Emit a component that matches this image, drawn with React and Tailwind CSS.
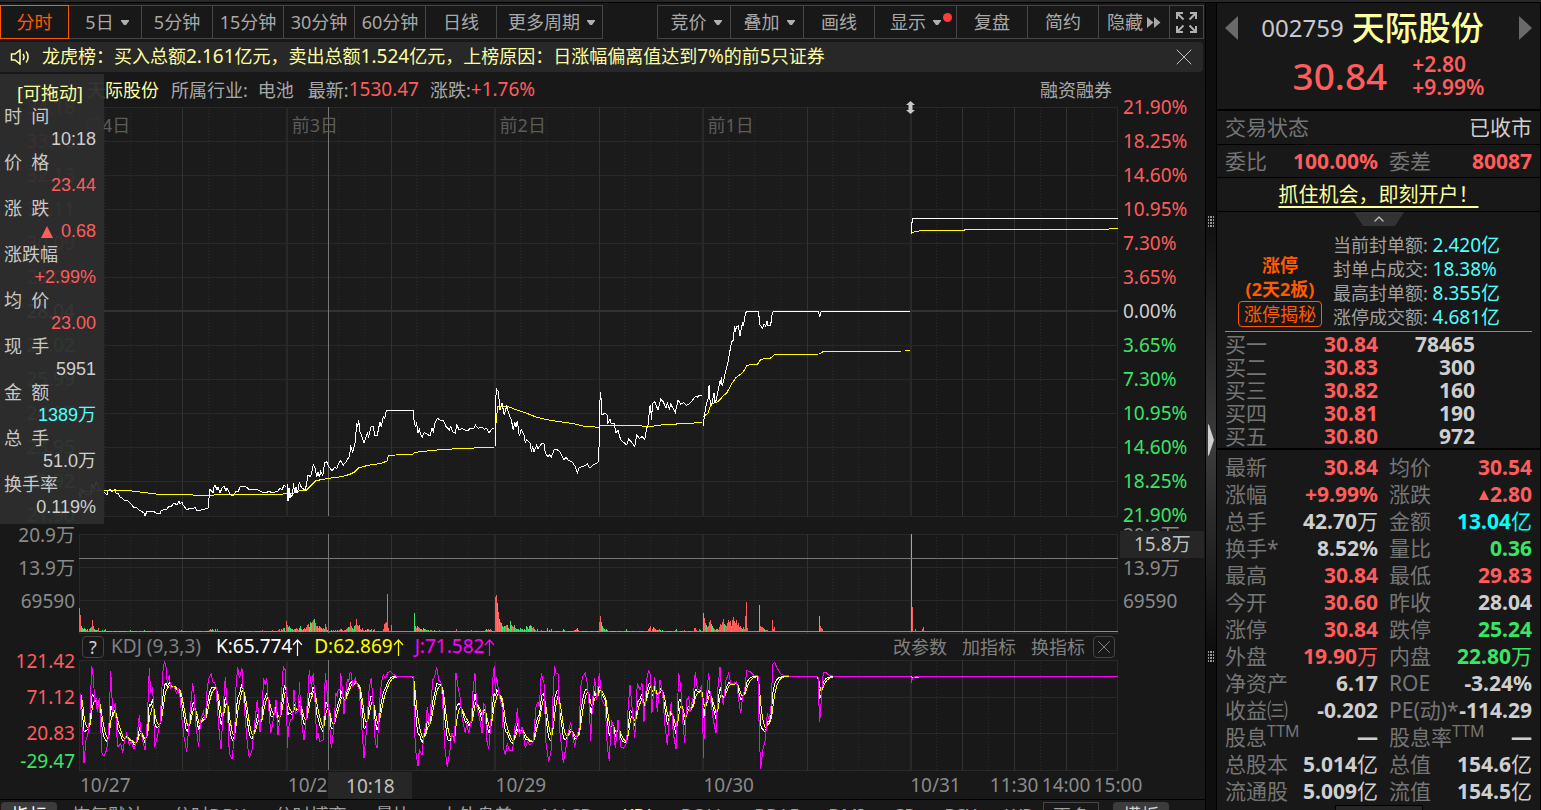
import { X, ChevronUp } from "lucide-react";

const RED = "#ff5c5c";
const GREEN = "#38e664";

const periods = [
  { label: "分时", width: "w-[69px]", active: true },
  { label: "5日", width: "w-[74px]", menu: true },
  { label: "5分钟", width: "w-[72px]" },
  { label: "15分钟", width: "w-[72px]" },
  { label: "30分钟", width: "w-[72px]" },
  { label: "60分钟", width: "w-[72px]" },
  { label: "日线", width: "w-[72px]" },
  { label: "更多周期", width: "w-[107px]", menu: true },
];

const tools = [
  { label: "竞价", width: "w-[74px]", menu: true },
  { label: "叠加", width: "w-[74px]", menu: true },
  { label: "画线", width: "w-[72px]" },
  { label: "显示", width: "w-[83px]", menu: true, dot: true },
  { label: "复盘", width: "w-[72px]" },
  { label: "简约", width: "w-[72px]" },
];

const priceLabels = ["34.18", "33.16", "32.13", "31.11", "30.09", "29.06", "28.04", "27.02", "25.99", "24.97", "23.95", "22.92", "21.90"];
const percentLabels = ["21.90%", "18.25%", "14.60%", "10.95%", "7.30%", "3.65%", "0.00%", "3.65%", "7.30%", "10.95%", "14.60%", "18.25%", "21.90%"];

const cursorRows = [
  { label: "时  间", value: "10:18", color: "text-[#cfcfcf]" },
  { label: "价  格", value: "23.44", color: "text-[#ff5c5c]" },
  { label: "涨  跌", value: "0.68", color: "text-[#ff5c5c]", up: true },
  { label: "涨跌幅", value: "+2.99%", color: "text-[#ff5c5c]" },
  { label: "均  价", value: "23.00", color: "text-[#ff5c5c]" },
  { label: "现  手", value: "5951", color: "text-[#cfcfcf]" },
  { label: "金  额", value: "1389万", color: "text-[#50ffff]" },
  { label: "总  手", value: "51.0万", color: "text-[#cfcfcf]" },
  { label: "换手率", value: "0.119%", color: "text-[#cfcfcf]" },
];

const sealRows = [
  ["当前封单额:", "2.420亿"],
  ["封单占成交:", "18.38%"],
  ["最高封单额:", "8.355亿"],
  ["涨停成交额:", "4.681亿"],
];

const bids = [
  ["买一", "30.84", "78465"],
  ["买二", "30.83", "300"],
  ["买三", "30.82", "160"],
  ["买四", "30.81", "190"],
  ["买五", "30.80", "972"],
];

const white = "text-[#cfcfcf]";
const red = "text-[#ff5c5c]";
const green = "text-[#38e664]";

const stats = [
  { label: "最新", value: "30.84", color: red },
  { label: "均价", value: "30.54", color: red },
  { label: "涨幅", value: "+9.99%", color: red },
  { label: "涨跌", value: "2.80", color: red, up: true },
  { label: "总手", value: "42.70", unit: "万", color: white },
  { label: "金额", value: "13.04", unit: "亿", color: "text-[#00ffff]" },
  { label: "换手*", value: "8.52%", color: white },
  { label: "量比", value: "0.36", color: green },
  { label: "最高", value: "30.84", color: red },
  { label: "最低", value: "29.83", color: red },
  { label: "今开", value: "30.60", color: red },
  { label: "昨收", value: "28.04", color: white },
  { label: "涨停", value: "30.84", color: red },
  { label: "跌停", value: "25.24", color: green },
  { label: "外盘", value: "19.90", unit: "万", color: red },
  { label: "内盘", value: "22.80", unit: "万", color: green },
  { label: "净资产", value: "6.17", color: white },
  { label: "ROE", value: "-3.24%", color: white },
  { label: "收益㈢", value: "-0.202", color: white },
  { label: "PE(动)*", value: "-114.29", color: white },
  { label: "股息", sup: "TTM", value: "—", color: white },
  { label: "股息率", sup: "TTM", value: "—", color: white },
  { label: "总股本", value: "5.014", unit: "亿", color: white },
  { label: "总值", value: "154.6", unit: "亿", color: white },
  { label: "流通股", value: "5.009", unit: "亿", color: white },
  { label: "流值", value: "154.5", unit: "亿", color: white },
];

const indicatorTabs = ["恢复默认", "分时DDX", "分时博弈", "量比", "大外盘差", "MACD", "KDJ", "BOLL", "BBAE", "DMI", "CR", "BSY", "WR"];

// Each session is stored as flat x,y pairs with its own origin and scale
const priceSeries = [
  { ox: 0, oy: 0, kx: 1, ky: 1, d: [79,492,80,498,82,490,85,494,91,494,92,484,94,489,96,482,98,485,100,491,103,490,104,492,107,495,108,491,110,489,112,492,115,489,116,493,118,493,120,497,122,498,125,501,127,500,129,502,132,505,134,508,136,507,139,510,141,511,144,513,145,516,147,511,150,512,153,511,156,513,160,514,161,511,163,510,167,509,169,506,171,507,174,503,177,505,179,501,180,504,182,502,183,505,187,510,190,508,193,509,195,507,197,511,201,510,205,509,208,508,209,498,210,489,213,493,214,487,215,485,217,490,218,487,220,493,222,488,224,486,226,491,227,488,230,494,233,496,236,491,238,492,240,487,242,486,246,487,250,490,255,489,258,490,262,492,266,493,269,491,272,493,278,491,280,488,282,490,284,485,286,487] },
  { ox: 287, oy: 485, kx: 1, ky: 1, d: [0,-1,1,16,2,3,3,13,4,8] },
  { ox: 290, oy: 280, kx: 1 / 3, ky: 1 / 3, d: [0,640,5,648,8,645,10,610,14,640,18,622,21,638,24,630,28,605,34,622,42,628,46,630,50,610,54,585,62,590,70,555,75,565,80,590,84,575,88,592,92,575,98,587,104,548,110,545,116,560,126,572,134,562,140,566,146,550,152,542,160,555,168,545,178,530,182,500,188,515,196,485,200,430,203,440,206,420,210,455,216,470,222,490,228,470,232,460,236,470,244,438,250,440,254,465,262,465,270,425,274,440,280,410,284,415,288,395,292,391,370,391,372,420,376,440,380,430,384,460,388,448,392,462,397,472,402,458,412,462,420,468,426,445,430,455,434,432,442,415,450,420,460,420,468,440,478,450,482,440,488,455,496,460,500,435,508,450,516,445,524,450,534,452,540,445,552,445,556,435,564,445,576,442,584,448,590,445,597,460,604,448,612,445] },
  { ox: 290, oy: 280, kx: 1 / 3, ky: 1 / 3, d: [616,498,617,355,620,328,625,335,630,390,636,370,643,405,650,378,656,400,664,420,670,450,674,425,678,440,682,422,688,468,694,448,702,465,706,488,710,480,720,490,724,512,728,500,732,516,740,495,744,508,748,500,756,490,762,492,766,520,774,530,778,524,784,532,792,510,800,508,810,515,822,540,828,532,836,542,846,545,856,560,862,580,868,562,880,560,892,552,900,565,910,555,922,548,926,545,930,360,932,335,936,405,944,400,952,405,954,430,960,418,964,432,972,430,978,460,984,450,992,480,1002,488,1010,495,1016,478,1026,488,1034,500,1040,465,1048,475,1056,470,1064,478,1070,445,1076,430,1078,385,1082,375,1084,420,1088,370,1094,365,1104,390,1112,358,1120,365,1128,385,1132,368,1138,388,1142,372,1156,398,1164,360,1172,372,1180,368,1190,376,1200,370,1212,355,1218,348,1221,352,1228,346,1236,346] },
  { ox: 600, oy: 200, kx: 0.3827, ky: 1 / 3, d: [270,678,273,645,278,610,282,600,285,555,288,610,292,615,298,580,300,605,303,602,308,575,313,545,315,552,317,530,319,558,323,545,327,520,334,490,340,450,344,425,349,420,351,378,354,390,357,380,361,378,366,408,370,380,373,370,375,375,380,340,384,334,414,334,418,375,425,385,429,372,433,378,436,362,439,378,446,375,450,340,453,334,571,334,574,352,578,334,810,334] },
  { ox: 600, oy: 200, kx: 0.3827, ky: 1 / 3, d: [814,100,815,70,817,55,1354,55] },
];

const averageSeries = [
  { ox: 0, oy: 130, kx: 1 / 3, ky: 1 / 3, d: [237,1075,260,1085,312,1080,370,1080,420,1086,475,1093,560,1094,620,1097,650,1094,845,1093,860,1090] },
  { ox: 290, oy: 280, kx: 1 / 3, ky: 1 / 3, d: [0,643,30,632,50,630,78,602,115,595,155,590,180,583,195,575,207,563,235,556,275,550,292,542,295,526,368,523,375,517,440,510,500,506,575,503,612,502] },
  { ox: 290, oy: 280, kx: 1 / 3, ky: 1 / 3, d: [618,430,623,378,650,378,680,390,710,400,740,412,780,421,850,431,880,438,925,442,932,437,1025,437,1085,439,1120,434,1200,430,1236,427] },
  { ox: 600, oy: 200, kx: 0.3827, ky: 1 / 3, d: [270,650,282,640,290,612,308,605,320,590,332,577,345,550,355,533,373,518,384,496,412,492,420,478,446,474,455,465,572,462,585,454,796,453,810,452] },
  { ox: 600, oy: 200, kx: 0.3827, ky: 1 / 3, d: [814,103,816,97,845,91,950,91,958,88,1320,88,1354,85] },
];

// Turning points of the J line, x and y in thirds of a unit
const jTurns = [
  { ox: 0, d: [240,520,246,620,252,730,258,660,264,640,270,580,275,437,280,470,284,540,288,535,292,575,298,535,302,620,306,700,312,708,320,690,326,640,332,452,338,575,346,548,350,640,354,680,362,670,368,698,374,660,380,640,388,675,394,665,402,688,410,660,418,585,424,640,430,670,435,690,442,600,448,445,452,520,458,500,464,680,472,650,480,610,486,500,490,440,494,425,498,440,502,490,508,465,512,505,522,500,530,520,534,505,540,530,546,600,552,650,560,695,568,600,578,490,582,520,588,620,596,680,602,600,610,575,616,600,622,500,628,470,634,462,638,485,644,490,648,500,652,560,658,640,663,688,670,560,676,472,682,560,688,700,696,718,704,640,708,500,713,442,718,475,726,445,730,520,736,600,742,670,748,715,756,690,764,610,772,540,780,635,786,560,791,475,796,495,800,475,806,560,812,640,820,600,828,540,834,645,840,590,846,500,850,440,856,450,860,550,862,683,866,620,872,600,878,595,882,510,888,580,896,570,898,485,904,600,912,660,918,600,924,520,928,450,934,500,940,460,946,560,950,660,954,640,960,665,970,660,976,460,980,500,988,600,994,685,1000,640,1008,520,1012,530,1015,508,1020,510,1022,458,1028,520,1032,583,1036,530,1042,480,1046,485,1050,458,1054,460,1058,500,1066,475,1072,495,1078,510,1084,600,1092,715,1100,620,1108,500,1114,475,1120,560,1126,670,1132,685,1138,560,1144,490,1150,465,1156,475,1164,457,1172,455,1180,462,1188,468] },
  { ox: 1200, d: [2,470,40,470,44,640,48,700,54,738,58,690,66,705,72,640,78,610,82,560,88,615,94,540,98,480,104,470,110,440,116,480,124,490,130,580,134,680,142,740,150,690,156,640,164,670,168,460,174,500,180,530,186,590,196,640,200,610,206,640,214,600,220,500,225,460,230,560,238,590,246,640,250,550,256,560,260,660,266,688,272,620,278,480,283,437,286,510,290,470,298,530,306,560,312,690,316,705,322,670,328,690,338,690,344,620,348,610,352,565,358,650,366,620,376,685,382,665,390,675,400,665,408,560,414,545,418,560,424,460,432,490,438,670,446,725,454,690,460,500,464,437,468,460,474,460,480,640,490,728,498,680,504,640,512,605,518,650,524,680,530,650,538,620,542,500,548,470,556,460,562,490,568,560,572,662,578,540,584,475,590,540,598,460,606,540,616,560,622,680,628,722,634,600,640,620,646,685,654,600,662,680,670,685,680,670,684,570,690,495,696,560,704,655,712,490,720,510,726,490,732,605,740,480,746,450,752,470,756,578,764,470,772,575,780,480,788,520,794,610,802,675,808,590,814,545,820,640,828,688,836,460,842,500,848,600,854,670,860,540,866,530,870,575,880,530,886,455,892,505,898,510,904,500,908,560,910,715,914,600,920,520,926,460,932,540,940,600,948,640,954,500,960,440,966,530,970,555,978,480,986,460,992,490,1002,490,1010,485,1016,540,1022,580,1028,530,1034,510,1040,452,1050,455,1060,465,1074,468,1078,640,1082,748,1088,690,1096,660,1102,580,1108,600,1114,550,1118,432,1124,428,1132,445,1142,462,1152,466,1180,470] },
  { ox: 2400, d: [0,470,54,470,56,535,59,605,62,570,66,500,70,458,78,458,86,465,100,468,120,470,333,470,335,482,338,474,345,470,955,470] },
];

// Bar heights per minute, negative for a falling minute
const volumeRuns = [
  [79, [24,17,-6,-4,-3,-4,-3,2,-3,1,3,-4,5,12,6,-3,-2,-2,2,4,-1,-1,1,-2,1,-2,3]],
  [130, [-2]], [144, [-2]], [181, [2]],
  [209, [2,3,-2,-3,2,1,-3,-1,3]],
  [262, [2]], [272, [2]],
  [278, [2,3,1,-3,2,4,-4,1,11,7,-5,6,-4,3,-3,2,3,-3,4,3,2,-4,-6,-3,2,-3,4,-3,5,7,8,-5,-10,-9,10,12,-13,9,6,-6,4,-6,5,-4,3,4,-3,8,5,-2,-3]],
  [331, [-2,1,2,-1,2,1,-2,1,2,3,-3,2,-1,2,-2,3,4,-5,5,10,6,-4,3,-6,7,13,7,6,-7,3,-2,4,2,-1,-2,2,-3,3,2,-2,3,1,-2,3]],
  [382, [1,3,8,9,10,38,4]], [391, [7]],
  [414, [-19,-6,4,-6,5,4,-3,-3,2,-4,-3,3,-2,2,-2,-1,2,2,-1,1,-2]],
  [439, [2]], [456, [3]], [471, [2]],
  [485, [2,-3,2,3,-2,3,2]],
  [495, [35,37,-29,20,-13,10,-9,-6,5,-6,6,7,-7,-4,3,-11,-7,6,5,-7,4,-3,3,-3,2,-4,3,-3,2,-3,2,-6,5,-3,-6,-7,-6,4,5,-3,2,1,-3]],
  [541, [2]], [547, [-4,1,-2]], [551, [-3]], [563, [-3,-2]], [574, [2,-2,3,-4,2]],
  [599, [10,16,-10,-6,4,-3,2,-3,2]],
  [626, [-3]], [648, [3,4,6,1,3,-5,4,-3,2,-2,2,3,-2,1,-2]],
  [675, [2,-3]], [684, [2]], [694, [4,4,2,1,1,3,-2]],
  [703, [-19,14,9,-7,5,6,10,12,-8,-6,-4,3,2,-3,-3,2,5,8,7,10,13,-8,7,6,9,12,10,11,-6,12,15,11,9,12,7,9,5,6,4,-3,5,3,16,30,4]],
  [759, [-27,6,5,5,4,-3,2,2,2]], [772, [12,3,5]],
  [819, [-16,6,4,3]], [911, [-98,25]], [915, [3]], [922, [3,5]],
];

const dayLines = [287, 495, 703, 911];
const halfLines = [182, 391, 599, 807, 962, 1014, 1066];
const dottedLines = [];
for (let i = 0; i < 39; i++) {
  const x = 104 + i * 26;
  const solid = [...dayLines, ...halfLines].some((s) => Math.abs(s - x) < 4);
  if (!solid) dottedLines.push(x);
}

const toPoints = ({ ox, oy, kx, ky, d }) => {
  const out = [];
  for (let i = 0; i < d.length; i += 2) {
    out.push(`${(ox + d[i] * kx).toFixed(1)},${(oy + d[i + 1] * ky).toFixed(1)}`);
  }
  return out.join(" ");
};

// K and D follow from J: J = 3K - 2D, D = 2/3 D' + 1/3 K
const buildKdj = () => {
  const turns = [];
  jTurns.forEach(({ ox, d }) => {
    for (let i = 0; i < d.length; i += 2) turns.push([ox + d[i], d[i + 1]]);
  });
  const k = [];
  const d = [];
  let prev = 515;
  let seg = 0;
  for (let x = 242; x < 3354; x += 2.6) {
    while (seg < turns.length - 2 && turns[seg + 1][0] < x) seg++;
    const [x0, y0] = turns[seg];
    const [x1, y1] = turns[seg + 1];
    const j = y0 + ((y1 - y0) * (x - x0)) / (x1 - x0);
    const dv = (6 * prev + j) / 7;
    const kv = (j + 2 * dv) / 3;
    prev = dv;
    k.push(`${(x / 3).toFixed(1)},${(520 + kv / 3).toFixed(1)}`);
    d.push(`${(x / 3).toFixed(1)},${(520 + dv / 3).toFixed(1)}`);
  }
  return {
    j: turns.map(([x, y]) => `${(x / 3).toFixed(1)},${(520 + y / 3).toFixed(1)}`).join(" "),
    k: k.join(" "),
    d: d.join(" "),
  };
};

const kdj = buildKdj();

function Grid({ top, bottom, rows }) {
  return (
    <g shapeRendering="crispEdges" fill="none">
      <rect x="79" y={top} width="832" height={bottom - top} fill="#1b1b1b" />
      {rows.map((y) => (
        <line key={y} x1="79" x2="1118" y1={y + 0.5} y2={y + 0.5} stroke="#292929" />
      ))}
      {dottedLines.map((x) => (
        <line key={x} x1={x + 0.5} x2={x + 0.5} y1={top} y2={bottom} stroke="#2a2a2a" strokeDasharray="1 2" />
      ))}
      {halfLines.map((x) => (
        <line key={x} x1={x + 0.5} x2={x + 0.5} y1={top} y2={bottom} stroke="#323232" />
      ))}
      {dayLines.map((x) => (
        <line key={x} x1={x} x2={x} y1={top} y2={bottom} stroke="#282828" strokeWidth="2" />
      ))}
      <line x1="79.5" x2="79.5" y1={top} y2={bottom} stroke="#292929" />
      <line x1="1117.5" x2="1117.5" y1={top} y2={bottom} stroke="#292929" />
    </g>
  );
}

function PriceChart() {
  return (
    <svg className="block h-[411px] w-full" viewBox="79 107 1039 411" preserveAspectRatio="none">
      <Grid top={107} bottom={517} rows={[107, 141, 175, 209, 243, 277, 345, 379, 413, 447, 481, 516]} />
      <g shapeRendering="crispEdges" fill="none">
        <line x1="79" x2="1118" y1="311" y2="311" stroke="#323232" strokeWidth="2" />
        <line x1="328.5" x2="328.5" y1="107" y2="516" stroke="#777" />
        {averageSeries.map((s, i) => (
          <polyline key={i} points={toPoints(s)} stroke="#ffff00" vectorEffect="non-scaling-stroke" />
        ))}
        {priceSeries.map((s, i) => (
          <polyline key={i} points={toPoints(s)} stroke="#ffffff" vectorEffect="non-scaling-stroke" />
        ))}
      </g>
    </svg>
  );
}

function VolumeChart() {
  return (
    <svg className="block h-[100px] w-full" viewBox="79 534 1039 100" preserveAspectRatio="none">
      <Grid top={534} bottom={633} rows={[534, 567, 600, 633]} />
      <g shapeRendering="crispEdges">
        <rect x="79" y="631" width="1039" height="1" fill={RED} />
        <line x1="105" x2="280" y1="631.5" y2="631.5" stroke={GREEN} strokeDasharray="7 2 3 1 9 3" />
        <line x1="425" x2="495" y1="631.5" y2="631.5" stroke={GREEN} strokeDasharray="3 4 5 2" />
        <line x1="540" x2="695" y1="631.5" y2="631.5" stroke={GREEN} strokeDasharray="6 2 3 3" />
        {volumeRuns.map(([x, bars]) =>
          bars.map((h, i) => (
            <rect key={x + i} x={x + i} y={632 - Math.abs(h)} width="1" height={Math.abs(h)} fill={h > 0 ? RED : GREEN} />
          ))
        )}
        <line x1="79" x2="1118" y1="558.5" y2="558.5" stroke="#777" />
        <line x1="328.5" x2="328.5" y1="534" y2="633" stroke="#777" />
      </g>
    </svg>
  );
}

function KdjChart() {
  return (
    <svg className="block h-[111px] w-full" viewBox="79 660 1039 111" preserveAspectRatio="none">
      <Grid top={660} bottom={770} rows={[660, 697, 733, 770]} />
      <g shapeRendering="crispEdges" fill="none">
        <line x1="328.5" x2="328.5" y1="660" y2="770" stroke="#777" />
        <polyline points={kdj.k} stroke="#ffffff" vectorEffect="non-scaling-stroke" />
        <polyline points={kdj.d} stroke="#ffff00" vectorEffect="non-scaling-stroke" />
        <polyline points={kdj.j} stroke="#ff00ff" vectorEffect="non-scaling-stroke" />
      </g>
    </svg>
  );
}

function Caret() {
  return (
    <svg className="h-[5px] w-[8px]" viewBox="0 0 8 5" fill="#b0b0b0">
      <path d="M0 0h8v1L5 5H3L0 1z" />
    </svg>
  );
}

function ToolButton({ label, width, active, menu, dot }) {
  return (
    <button
      className={`relative -ml-px flex h-[34px] items-center justify-center gap-[7px] border whitespace-nowrap first:ml-0 ${width} ${
        active ? "z-10 border-[#ff5a00] text-[#ff5a00]" : "border-[#464646]"
      } ${menu && !dot ? "pl-1" : ""}`}
    >
      {label}
      {menu && <Caret />}
      {dot && <span className="absolute top-[7px] right-1 h-[9px] w-[9px] rounded-full bg-[#ff3c3c]" />}
    </button>
  );
}

function Toolbar() {
  return (
    <div className="mt-[2px] flex justify-between pr-[1px] text-[#a8a8a8]">
      <div className="flex">
        {periods.map((p) => (
          <ToolButton key={p.label} {...p} />
        ))}
      </div>
      <div className="flex">
        {tools.map((t) => (
          <ToolButton key={t.label} {...t} />
        ))}
        <button className="-ml-px flex h-[34px] w-[72px] items-center justify-center gap-1 border border-[#3a3a3a] whitespace-nowrap">
          隐藏
          <svg className="h-[11px] w-[14px]" viewBox="0 0 14 11" fill="#a8a8a8">
            <path d="M0 0l6.500 5.500L0 11zM7 0l6.500 5.500L7 11z" />
          </svg>
        </button>
        <button className="-ml-px flex h-[34px] w-[35px] items-center justify-center border border-[#464646]" aria-label="全屏">
          <svg className="h-[21px] w-[21px]" viewBox="0 0 21 21" fill="none" stroke="#b0b0b0" strokeWidth="2">
            <path d="M1 7V1h6M14 1h6v6M20 14v6h-6M7 20H1v-6M1 1l6.500 6.500M20 1l-6.500 6.500M20 20l-6.500-6.500M1 20l6.500-6.500" />
          </svg>
        </button>
      </div>
    </div>
  );
}

function Num({ children }) {
  return <span className="text-[19px]">{children}</span>;
}

function Notice() {
  return (
    <div className="mt-[3px] mr-[2px] flex h-[30px] items-center rounded-r bg-[#282828] pr-[5px] pl-[10px] text-[#fdff9f]">
      <svg className="mr-3 h-[16px] w-[20px]" viewBox="0 0 20 16" fill="none" stroke="#fdff9f" strokeWidth="1.500">
        <path d="M1.500 5h3.500l5-4v14l-5-4H1.500zM13 5c1.300 1.800 1.300 4.200 0 6M16 2.500c2.800 3 2.800 8 0 11" />
      </svg>
      <p className="flex-1 truncate">
        龙虎榜：买入总额<Num>2.161</Num>亿元，卖出总额<Num>1.524</Num>亿元，上榜原因：日涨幅偏离值达到<Num>7%</Num>的前<Num>5</Num>只证券
      </p>
      <button aria-label="关闭">
        <X size={28} strokeWidth={1} absoluteStrokeWidth className="text-[#c0c0c0]" />
      </button>
    </div>
  );
}

function CursorPanel() {
  return (
    <div className="absolute top-[2px] left-0 z-20 w-[104px] bg-[#2d2d2d]/95 pt-2 pb-[5px]">
      <p className="h-[23px] pr-[4px] text-center leading-[23px] text-[#fdff9f]">[可拖动]</p>
      {cursorRows.map((row) => (
        <div key={row.label} className="pr-2 pl-1 leading-[23px] text-[#c8c8c8]">
          <p className="h-[23px] whitespace-pre">{row.label}</p>
          <p className={`flex h-[23px] items-center justify-end font-['Liberation_Sans','Noto_Sans_CJK_SC',sans-serif] ${row.color}`}>
            {row.up && (
              <svg className="mr-2 h-[12px] w-[12px]" viewBox="0 0 12 12" fill="#ff5c5c">
                <path d="M6 0l6 12H0z" />
              </svg>
            )}
            {row.value}
          </p>
        </div>
      ))}
    </div>
  );
}

function axisColor(i) {
  if (i < 6) return red;
  return i === 6 ? white : green;
}

function LeftAxis() {
  return (
    <div className="w-[79px] shrink-0 pt-[18px] pr-1 text-right text-[19px]">
      {priceLabels.map((label, i) => (
        <p key={label} className={`h-[34px] leading-[34px] ${axisColor(i)}`}>{label}</p>
      ))}
      <div className="-mt-[13px] leading-[33px] text-[#8a8a8a]">
        <p>20.9万</p>
        <p>13.9万</p>
        <p>69590</p>
      </div>
      <div className="mt-[25px] leading-9 text-[#ff5c5c]">
        <p>121.42</p>
        <p>71.12</p>
        <p>20.83</p>
        <p className="leading-5 text-[#38e664]">-29.47</p>
      </div>
    </div>
  );
}

function RightAxis() {
  return (
    <div className="w-[87px] shrink-0 pt-[18px] pl-[5px] text-[19px]">
      {percentLabels.map((label, i) => (
        <p key={i} className={`h-[34px] leading-[34px] ${axisColor(i)}`}>{label}</p>
      ))}
      <div className="relative -mt-[13px] leading-[33px] text-[#8a8a8a]">
        <p>20.9万</p>
        <p>13.9万</p>
        <p>69590</p>
        <p className="absolute top-[12px] right-[1px] -left-[3px] h-[27px] bg-[#262626] pl-[14px] leading-[27px] text-[#c0c0c0]">15.8万</p>
      </div>
    </div>
  );
}

function UpArrow() {
  return (
    <svg className="h-[17px] w-[11px]" viewBox="0 0 11 17" fill="none" stroke="currentColor" strokeWidth="1.200">
      <path d="M5.500 17V1M1 6l4.500-5L10 6" />
    </svg>
  );
}

function KdjHeader() {
  return (
    <div className="flex h-[26px] items-center pr-[3px] pl-[3px] whitespace-nowrap text-[#808080]">
      <button className="mr-[7px] flex h-[22px] w-[22px] items-center justify-center rounded-sm border border-[#444] text-[#d0d0d0]">?</button>
      <div className="flex items-center text-[19px]">
        <span className="mr-[15px]">KDJ (9,3,3)</span>
        <span className="mr-[11px] flex items-center text-white">K:65.774<UpArrow /></span>
        <span className="mr-[11px] flex items-center text-[#ffff00]">D:62.869<UpArrow /></span>
        <span className="flex items-center text-[#ff00ff]">J:71.582<UpArrow /></span>
      </div>
      <div className="ml-auto flex items-center gap-[15px]">
        <button>改参数</button>
        <button>加指标</button>
        <button>换指标</button>
      </div>
      <button className="ml-2 flex h-[22px] w-[22px] items-center justify-center rounded-sm border border-[#444]" aria-label="关闭">
        <X size={22} strokeWidth={1} absoluteStrokeWidth className="shrink-0" />
      </button>
    </div>
  );
}

function TimeAxis() {
  return (
    <div className="relative grid h-[28px] grid-cols-5 text-[19px] leading-[28px] text-[#8a8a8a]">
      <span className="pl-px">10/27</span>
      <span className="pl-px">10/28</span>
      <span className="pl-px">10/29</span>
      <span className="pl-px">10/30</span>
      <div className="grid grid-cols-4">
        <span>10/31</span>
        <span className="col-start-3 flex w-0 justify-center">11:30</span>
        <div className="flex justify-between">
          <span className="flex w-0 justify-center">14:00</span>
          <span className="flex w-0 justify-center">15:00</span>
        </div>
      </div>
      <span className="absolute top-[1px] left-[24%] flex h-[27px] w-[84px] items-center justify-center bg-[#262626] text-[#c0c0c0]">10:18</span>
    </div>
  );
}

function ChartArea() {
  return (
    <div className="relative flex">
      <CursorPanel />
      <LeftAxis />
      <div className="min-w-0 flex-1">
        <div className="flex h-[35px] items-center pr-[6px] pl-2 whitespace-nowrap text-[#a8a8a8]">
          <span className="mr-3 text-[#fdff9f]">天际股份</span>
          <span className="mr-[10px]">所属行业:</span>
          <span className="mr-[14px]">电池</span>
          <span>最新:</span>
          <span className="mr-[11px] text-[19px] text-[#ff5c5c]">1530.47</span>
          <span>涨跌:</span>
          <span className="text-[19px] text-[#ff5c5c]">+1.76%</span>
          <span className="ml-auto">融资融券</span>
        </div>
        <div className="relative">
          <PriceChart />
          <div className="absolute inset-x-0 top-[4px] grid grid-cols-5 leading-[28px] text-[#5c5c5c]">
            <span className="pl-[5px]">前4日</span>
            <span className="pl-[5px]">前3日</span>
            <span className="pl-[5px]">前2日</span>
            <span className="pl-[5px]">前1日</span>
          </div>
          <svg className="absolute -top-[6px] left-[80%] -ml-[4px] h-[13px] w-[9px]" viewBox="0 0 9 13" fill="#c8c8c8">
            <path d="M4.500 0L9 4H6.500v5H9l-4.500 4L0 9h2.500V4H0z" />
          </svg>
        </div>
        <div className="h-4" />
        <VolumeChart />
        <KdjHeader />
        <KdjChart />
        <TimeAxis />
      </div>
      <RightAxis />
    </div>
  );
}

function IndicatorTabs() {
  return (
    <nav className="flex items-start border-t border-black pt-[2px] pl-[1px] leading-[27px] whitespace-nowrap text-[#a0a0a0]">
      <button className="mr-[15px] rounded-t-sm bg-[#3c3c3c] px-[10px] text-white">指标</button>
      <div className="flex gap-[29px]">
        {indicatorTabs.map((tab) => (
          <button key={tab} className={tab === "KDJ" ? "text-[#fdff9f]" : ""}>{tab}</button>
        ))}
      </div>
      <button className="ml-[10px] border border-[#464646] px-[9px]">更多</button>
      <button className="ml-[14px] rounded-sm bg-[#3c3c3c] px-[10px] text-[#d0d0d0]">模板</button>
    </nav>
  );
}

function Grip() {
  return (
    <svg className="h-[12px] w-[6px]" viewBox="0 0 6 12" fill="#9a9a9a" shapeRendering="crispEdges">
      {[0, 3, 6, 9].map((y) => (
        <path key={y} d={`M0 ${y}h1v2h-1zM2 ${y}h2v2h-2zM5 ${y}h1v2h-1z`} />
      ))}
    </svg>
  );
}

function Gutter() {
  return (
    <div className="flex w-[12px] shrink-0 flex-col items-center border-x border-black bg-linear-to-b from-[#0e0e0e] from-25% via-[#3c3c3c] via-55% to-[#0e0e0e] to-80% pt-[213px]">
      <Grip />
      <svg className="mt-[196px] h-[32px] w-[6px]" viewBox="0 0 6 32" fill="#d0d0d0">
        <path d="M0 0l1 1 5 15-5 15-1 1z" />
      </svg>
      <div className="h-[195px]" />
      <Grip />
    </div>
  );
}

function QuoteHeader() {
  return (
    <div className="border-b-2 border-black px-2 pb-[10px]">
      <div className="flex h-[50px] items-center justify-between">
        <button aria-label="上一只">
          <svg className="h-[24px] w-[13px]" viewBox="0 0 13 24" fill="#6a6a6a"><path d="M13 0v24L0 12z" /></svg>
        </button>
        <h1 className="flex items-center gap-2 pr-[12px] whitespace-nowrap">
          <span className="text-2xl text-[#c8c8d0]">002759</span>
          <span className="text-[33px] leading-[50px] font-medium text-[#fdff9f]">天际股份</span>
        </h1>
        <button aria-label="下一只">
          <svg className="h-[24px] w-[13px]" viewBox="0 0 13 24" fill="#6a6a6a"><path d="M0 0v24l13-12z" /></svg>
        </button>
      </div>
      <div className="flex h-[46px] items-center justify-center gap-[25px] pl-[20px] text-[#ff5c5c]">
        <span className="text-[37px] leading-[42px] font-medium">30.84</span>
        <div className="text-[21px] leading-[23px] font-semibold">
          <p>+2.80</p>
          <p>+9.99%</p>
        </div>
      </div>
    </div>
  );
}

function SealInfo() {
  return (
    <div className="flex flex-col">
      <button className="relative mx-auto flex h-[14px] w-[50px] justify-center" aria-label="收起">
        <svg className="absolute inset-0 h-full w-full" viewBox="0 0 50 14" fill="#333"><path d="M0 0h50l-9 14H9z" /></svg>
        <ChevronUp size={16} className="relative -mt-px text-[#c0c0c0]" />
      </button>
      <div className="mx-2 flex border-b border-[#8a8a8a] pt-[7px] pb-[2px] pl-[13px] text-lg leading-6">
        <div className="mr-[11px] flex w-[84px] flex-col pt-5 text-center text-[#ff5a00]">
          <p className="font-bold">涨停</p>
          <p className="font-bold whitespace-nowrap">(2天2板)</p>
          <button className="rounded border border-[#ff5a00] whitespace-nowrap">涨停揭秘</button>
        </div>
        <div className="whitespace-nowrap">
          {sealRows.map(([label, value]) => (
            <p key={label} className="text-[#a0a0a0]">
              {label} <span className="text-[19px] text-[#50ffff]">{value}</span>
            </p>
          ))}
        </div>
      </div>
    </div>
  );
}

function BidTable() {
  return (
    <div className="border-b-2 border-black px-2 pt-[1px]">
      <table className="w-full table-fixed">
        <tbody>
          {bids.map(([label, price, volume]) => (
            <tr key={label} className="leading-[23px]">
              <th scope="row" className="w-[53px] text-left font-normal text-[#757575]">{label}</th>
              <td className="w-[100px] text-right font-bold text-[#ff5c5c]">{price}</td>
              <td className="pr-[57px] text-right font-bold text-[#cfcfcf]">{volume}</td>
            </tr>
          ))}
        </tbody>
      </table>
    </div>
  );
}

function Stats() {
  return (
    <dl className="grid grid-cols-[153fr_143fr] gap-x-[11px] px-2 pt-1">
      {stats.map((s) => (
        <div key={s.label} className="flex h-[27px] justify-between leading-[27px] whitespace-nowrap">
          <dt className="w-0 text-[#757575]">
            {s.label}
            {s.sup && <sup className="text-base">{s.sup}</sup>}
          </dt>
          <dd className={`flex items-center font-bold ${s.color}`}>
            {s.up && (
              <svg className="mr-px h-[10px] w-[10px]" viewBox="0 0 10 10" fill="#ff5c5c"><path d="M5 0l5 10H0z" /></svg>
            )}
            {s.value}
            {s.unit && <span className="font-normal">{s.unit}</span>}
          </dd>
        </div>
      ))}
    </dl>
  );
}

function Sidebar() {
  return (
    <aside className="w-[324px] shrink-0 border-r border-black text-[21px]">
      <QuoteHeader />
      <div className="flex h-[34px] items-center justify-between border-b border-black px-2">
        <span className="text-[#757575]">交易状态</span>
        <span className="text-[#cfcfcf]">已收市</span>
      </div>
      <div className="grid h-[33px] grid-cols-[153fr_143fr] items-center gap-x-[11px] border-b border-black px-2">
        <p className="flex justify-between text-[#757575]">委比<span className="font-bold text-[#ff5c5c]">100.00%</span></p>
        <p className="flex justify-between text-[#757575]">委差<span className="font-bold text-[#ff5c5c]">80087</span></p>
      </div>
      <div className="flex h-[34px] items-center justify-center border-b border-black">
        <a href="#open" className="text-xl whitespace-nowrap text-[#fdff9f] underline underline-offset-4">抓住机会，即刻开户！</a>
      </div>
      <SealInfo />
      <BidTable />
      <Stats />
      <div className="mx-auto h-6 w-[88px] border border-black bg-[#262626]">
        <ChevronUp size={14} className="mx-auto text-[#a0a0a0]" />
      </div>
    </aside>
  );
}

export default function App() {
  return (
    <div className="flex h-screen flex-col overflow-hidden bg-[#181818] font-['Noto_Sans','Noto_Sans_CJK_SC',sans-serif] text-lg">
      <div className="h-[3px] shrink-0 border-b border-black bg-[#282828]" />
      <div className="flex min-h-0 flex-1">
        <main className="min-w-0 flex-1">
          <Toolbar />
          <Notice />
          <ChartArea />
          <IndicatorTabs />
        </main>
        <Gutter />
        <Sidebar />
      </div>
    </div>
  );
}
